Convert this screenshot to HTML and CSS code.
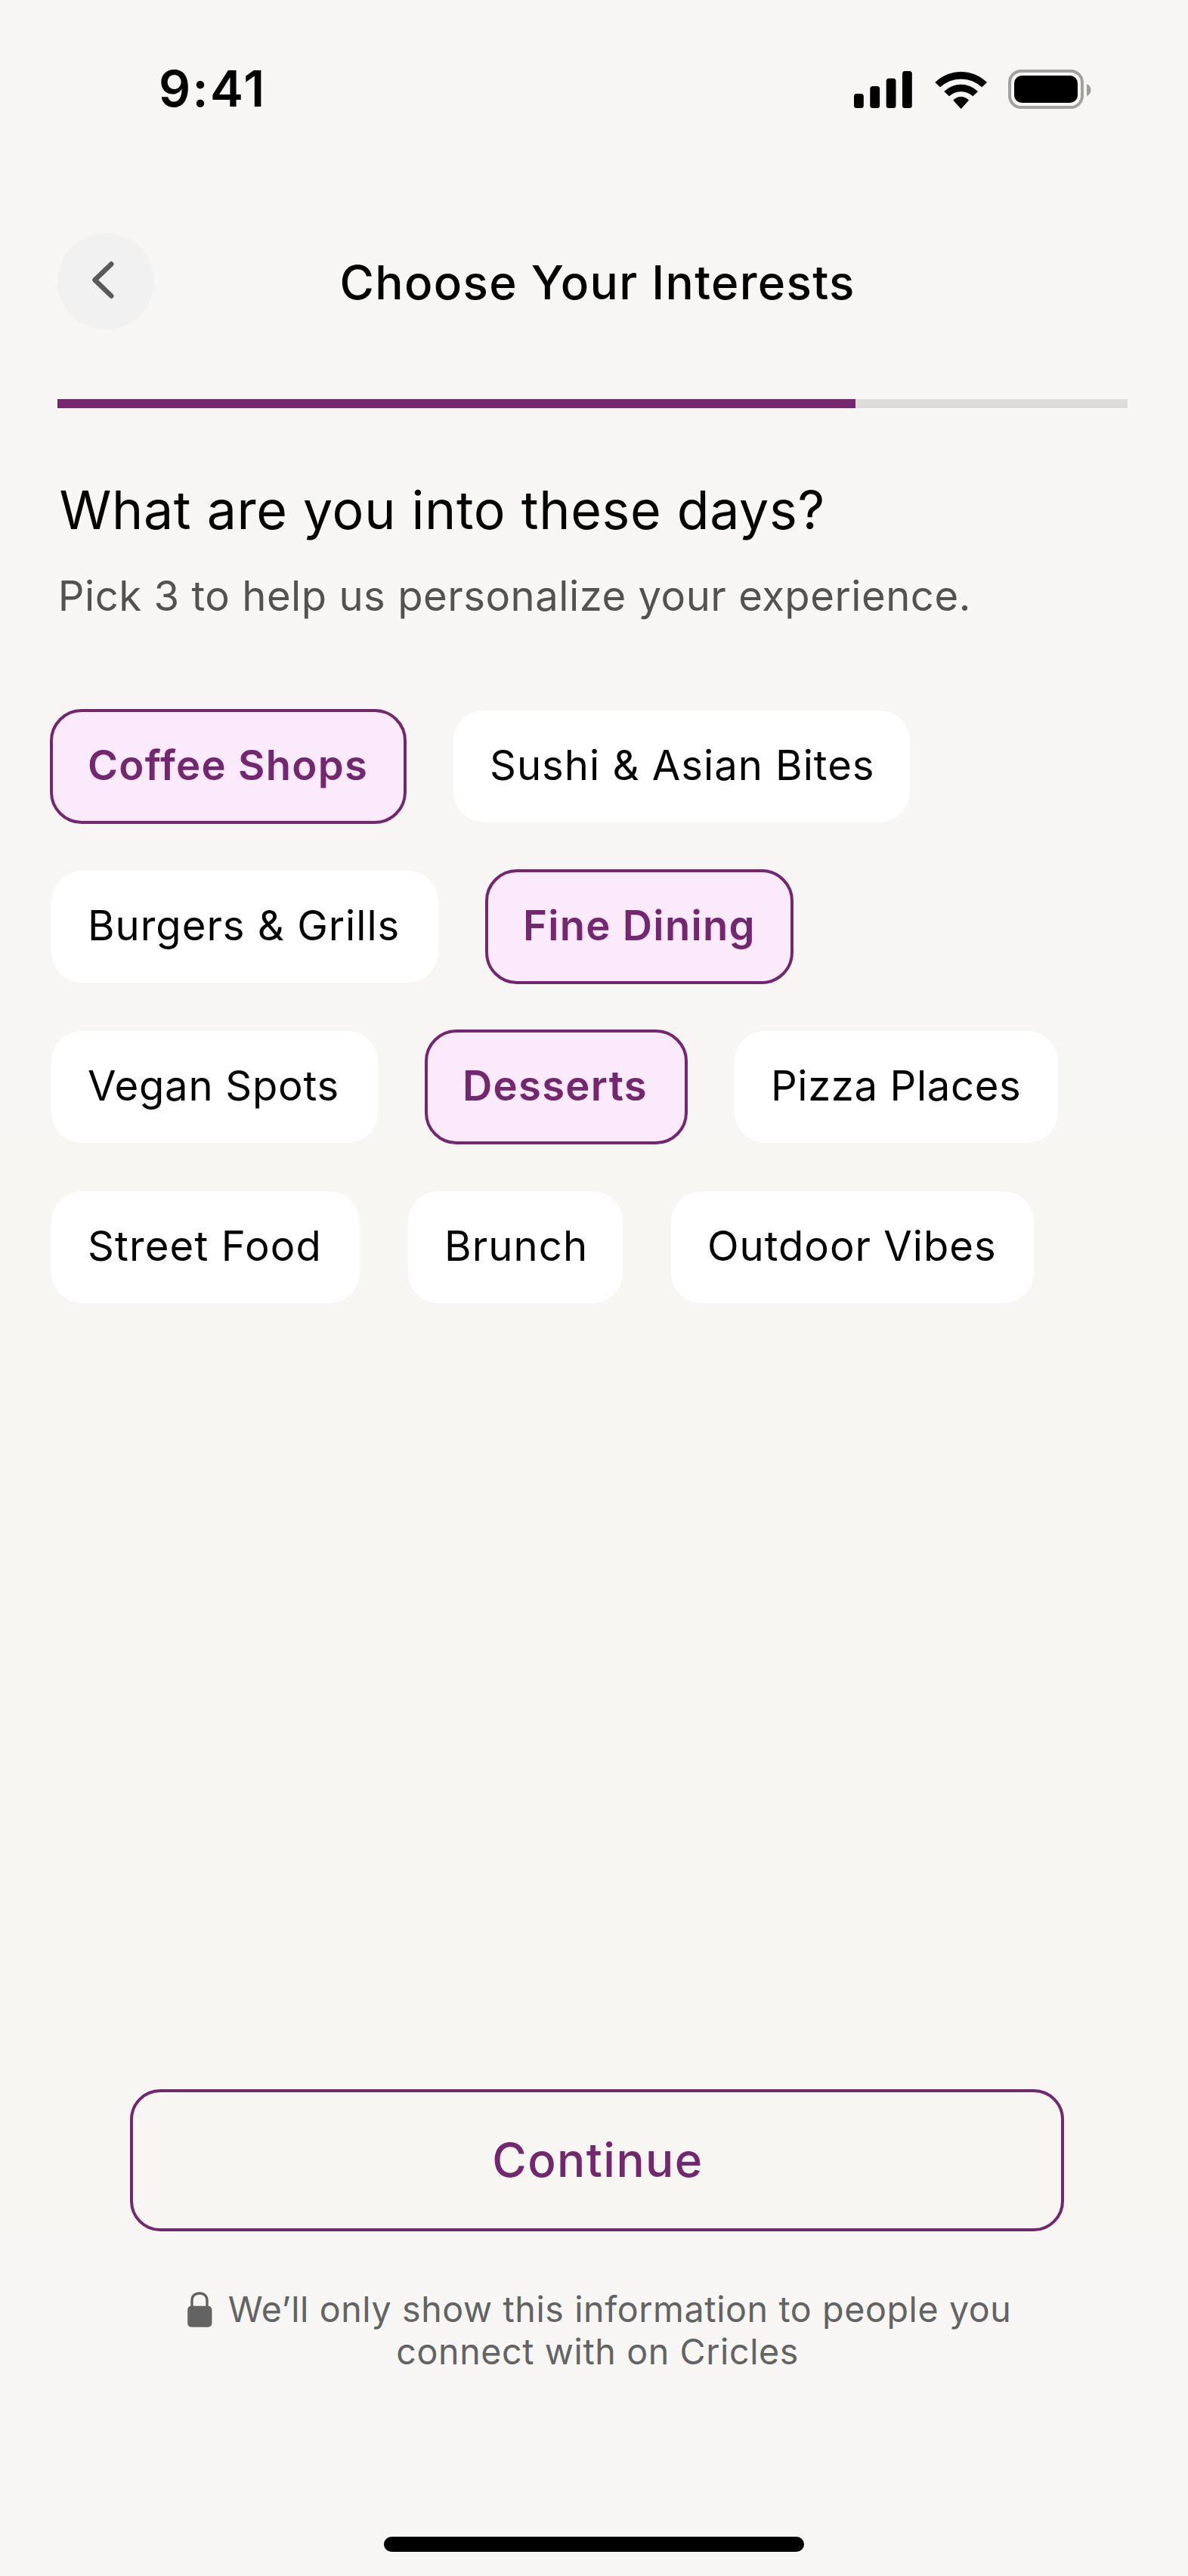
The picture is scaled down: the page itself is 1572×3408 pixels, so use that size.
FILE: index.html
```html
<!DOCTYPE html>
<html lang="en">
<head>
<meta charset="utf-8">
<title>Choose Your Interests</title>
<link rel="stylesheet" href="styles.css">
</head>
<body>
<div class="screen">
  <div class="status">
    <span class="time">9:41</span>
    <svg class="signal" viewBox="0 0 77 52">
      <rect x="0" y="32" width="12.8" height="19" rx="3.5"/>
      <rect x="21.3" y="22" width="12.8" height="29" rx="3.5"/>
      <rect x="42.7" y="11.7" width="12.8" height="39.3" rx="3.5"/>
      <rect x="64" y="2" width="12.8" height="49" rx="3.5"/>
    </svg>
    <svg class="wifi" viewBox="0 0 208 156" stroke="#000" stroke-width="2" stroke-linejoin="round">
      <path d="M2 51A147 147 0 0 1 206 51L187 69A122 122 0 0 0 21 69Z"/>
      <path d="M38 87A95 95 0 0 1 170 87L151 105A69 69 0 0 0 57 105Z"/>
      <path d="M74 122A41 41 0 0 1 134 122L104 155Z"/>
    </svg>
    <svg class="battery" viewBox="0 0 110 52">
      <rect x="2" y="2" width="96" height="48" rx="15.2" fill="none" stroke="#a2a19f" stroke-width="4"/>
      <rect x="8" y="8" width="84" height="36" rx="10"/>
      <path d="M104 19Q109.5 21.500 109.500 27T104 35Z" fill="#9e9d9c"/>
    </svg>
  </div>

  <header class="header">
    <button class="back" aria-label="Back">
      <svg viewBox="0 0 128 128" fill="none" stroke="#5a5a5a" stroke-width="6.500" stroke-linecap="round" stroke-linejoin="round"><path d="M71.300 41.300L49.500 62.300L71.300 83.500"/></svg>
    </button>
    <h1 class="title">Choose Your Interests</h1>
  </header>

  <div class="progress"><div class="bar"></div></div>

  <h2 class="question">What are you into these days?</h2>
  <p class="hint">Pick 3 to help us personalize your experience.</p>

  <div class="chips">
    <div class="row">
      <button class="chip on coffee">Coffee Shops</button>
      <button class="chip sushi">Sushi &amp; Asian Bites</button>
    </div>
    <div class="row">
      <button class="chip burgers">Burgers &amp; Grills</button>
      <button class="chip on fine">Fine Dining</button>
    </div>
    <div class="row">
      <button class="chip vegan">Vegan Spots</button>
      <button class="chip on desserts">Desserts</button>
      <button class="chip pizza">Pizza Places</button>
    </div>
    <div class="row">
      <button class="chip street">Street Food</button>
      <button class="chip brunch">Brunch</button>
      <button class="chip outdoor">Outdoor Vibes</button>
    </div>
  </div>

  <button class="continue">Continue</button>

  <div class="note">
    <div class="note-first">
      <svg class="lock" viewBox="0 0 33 48">
        <path d="M6 22V12.500C6 6.500 10 3 16 3S26 6.500 26 12.500V22" fill="none" stroke="#636363" stroke-width="3.400"/>
        <rect x="0.200" y="19.700" width="32.200" height="28" rx="5" fill="#636363"/>
      </svg>
      <span>We’ll only show this information to people you</span>
    </div>
    <div class="note-second">connect with on Cricles</div>
  </div>

  <div class="home"></div>
</div>
</body>
</html>
```
FILE: styles.css
```css
* { box-sizing: border-box; margin: 0; padding: 0; }

body { font-family: Inter, "Liberation Sans", sans-serif; color: #000; }

button { font: inherit; color: inherit; border: 0; background: none; }

svg { display: block; flex: none; }

.screen {
  width: 1572px;
  height: 3408px;
  display: flex;
  flex-direction: column;
  background: linear-gradient(#f7f6f4 1512px, #f7f6f2 1512px, #f7f6f2 2952px, #f7f6f5 2952px);
}

/* Status bar */
.status { height: 236px; padding-left: 210px; display: flex; align-items: center; }
.time { width: 920px; padding-bottom: 2px; font-size: 66px; line-height: 66px; font-weight: 600; letter-spacing: 2.39px; }
.signal { width: 77px; height: 52px; }
.wifi { width: 69.3px; height: 52px; margin-left: 29.5px; }
.battery { width: 110px; height: 52px; margin-left: 28.2px; }

/* Header */
.header { margin: 72px 76px 0; height: 128px; display: flex; align-items: center; }
.back { width: 128px; height: 128px; border-radius: 50%; background: #f1f1f1; }
.title { margin-left: 245.6px; padding-top: 3px; font-size: 62px; line-height: 76px; font-weight: 500; letter-spacing: 1.31px; white-space: nowrap; }

.progress { margin: 92px 80px 0 76px; height: 12px; background: #dddcda; }
.bar { width: 1056px; height: 12px; background: #72276f; }

/* Intro */
.question { margin: 92px 0 0 78.5px; font-size: 69.8px; line-height: 85px; font-weight: 400; letter-spacing: 0.69px; }
.hint { margin: 37px 0 0 76.8px; font-size: 54.4px; line-height: 68px; letter-spacing: 0.52px; color: #525252; }

/* Interest chips */
.chips { margin: 118px 0 0 68px; display: flex; flex-direction: column; gap: 64px; }
.row { display: flex; gap: 64px; height: 148px; }
.chip {
  flex: none;
  height: 148px;
  padding: 0 0 4px 48px;
  border-radius: 40px;
  background: #fff;
  font-size: 54.4px;
  line-height: 144px;
  letter-spacing: 1px;
  text-align: left;
  white-space: nowrap;
}
.chip.on {
  height: 152px;
  margin: -2px;
  padding-left: 46px;
  border: 4px solid #72276f;
  border-radius: 42px;
  background: #fbeafc;
  color: #72276f;
  font-weight: 600;
  line-height: 140px;
  letter-spacing: 1.29px;
}
.coffee { width: 472px; }
.sushi { width: 604px; }
.burgers { width: 512px; }
.fine { width: 408px; }
.vegan { width: 432px; letter-spacing: 0.76px; }
.desserts { width: 348px; }
.pizza { width: 428px; letter-spacing: 0.63px; }
.street { width: 408px; letter-spacing: 1.15px; }
.brunch { width: 284px; letter-spacing: 1.11px; }
.outdoor { width: 480px; }

/* Footer */
.continue {
  width: 1236px;
  height: 188px;
  margin: auto 0 0 172px;
  padding-left: 2px;
  border: 4px solid #72276f;
  border-radius: 40px;
  color: #72276f;
  font-size: 62px;
  line-height: 180px;
  font-weight: 500;
  letter-spacing: 1.42px;
}
.note { margin: 75px 0 0 248px; font-size: 46.6px; line-height: 56px; letter-spacing: 0.6px; color: #636363; white-space: nowrap; }
.note-first { display: flex; align-items: center; gap: 20.7px; height: 56px; }
.lock { width: 33px; height: 48px; }
.note-second { margin-left: 276.3px; }
.home { width: 556px; height: 20px; margin: 217px 0 32px 508px; border-radius: 10px; background: #000; }
```
